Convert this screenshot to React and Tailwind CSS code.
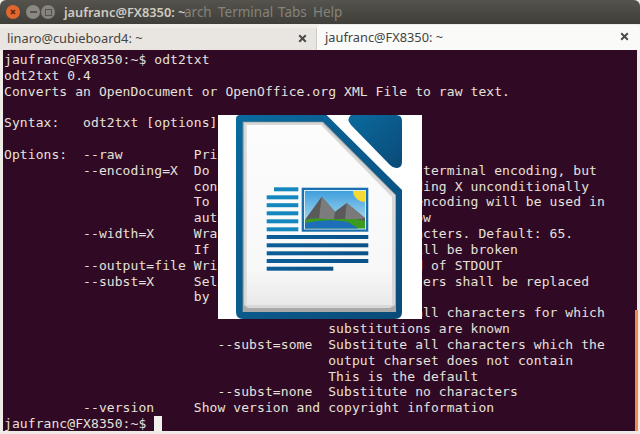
const lines = `jaufranc@FX8350:~$ odt2txt
odt2txt 0.4
Converts an OpenDocument or OpenOffice.org XML File to raw text.

Syntax:   odt2txt [options] filename

Options:  --raw         Print raw XML
          --encoding=X  Do not try to autodetect the terminal encoding, but
                        convert the document to encoding X unconditionally
                        To find out, which terminal encoding will be used in
                        auto mode, use --encoding=show
          --width=X     Wrap text lines after X characters. Default: 65.
                        If set to -1 then no lines will be broken
          --output=file Write output to file, instead of STDOUT
          --subst=X     Select how unmappable characters shall be replaced
                        by ...
                           --subst=all   Substitute all characters for which
                                         substitutions are known
                           --subst=some  Substitute all characters which the
                                         output charset does not contain
                                         This is the default
                           --subst=none  Substitute no characters
          --version     Show version and copyright information
jaufranc@FX8350:~$ `;

function Logo() {
  const short = [
    [56, 74.3], [48.7, 82.3], [48.7, 90.2], [48.7, 98.3], [48.7, 106.3], [48.7, 114.3],
  ];
  const long = [122, 130.3, 138.3, 146];
  return (
    <svg width="204" height="204" viewBox="0 0 204 204" className="block">
      <defs>
        <linearGradient id="blueDoc" x1="0" y1="0" x2="1" y2="1">
          <stop offset="0" stopColor="#0a6a9e" />
          <stop offset="1" stopColor="#0b4a78" />
        </linearGradient>
        <linearGradient id="page" x1="0" y1="0" x2="0" y2="1">
          <stop offset="0" stopColor="#fcfcfc" />
          <stop offset="0.8" stopColor="#f8f8f8" />
          <stop offset="1" stopColor="#e9e9e9" />
        </linearGradient>
        <linearGradient id="sky" x1="0" y1="0" x2="0" y2="1">
          <stop offset="0" stopColor="#3f9fdc" />
          <stop offset="1" stopColor="#bfe3f3" />
        </linearGradient>
        <linearGradient id="bars" x1="0" y1="0" x2="1" y2="0">
          <stop offset="0" stopColor="#0b5e98" />
          <stop offset="1" stopColor="#0b5288" />
        </linearGradient>
      </defs>
      <path d="M22 0H108.5L184 75V197Q184 204 177 204H25Q18 204 18 197V4Q18 0 22 0Z" fill="url(#blueDoc)" />
      <path d="M133 0H178Q184 0 184 6V47Q184 53 178 53Q175 53 172 50L133 10Q128 4 133 0Z" fill="url(#blueDoc)" />
      <path d="M24.7 6.7H105L178 80V197H24.7Z" fill="#a9a9a9" />
      <path d="M26 7.5H104L177 80V190L172 193H30L26 190Z" fill="#d8d8d8" />
      <path d="M28.7 10H103L174 82V190H28.7Z" fill="url(#page)" />
      {short.map(([x, y], i) => (
        <rect key={i} x={x} y={y - 2} width={80.3 - x} height="4" fill="#1487bf" />
      ))}
      {long.map((y, i) => (
        <rect key={i} x="48.7" y={y - 2} width="101.6" height="4" fill="url(#bars)" />
      ))}
      <rect x="48.7" y="151.7" width="66.6" height="4" fill="url(#bars)" />
      <rect x="83.7" y="72.7" width="66.6" height="44" fill="#1a6fae" />
      <rect x="86" y="75" width="62" height="39.5" fill="#d6eef8" />
      <rect x="87" y="76" width="60" height="37.5" fill="url(#sky)" />
      <path d="M147.5 76V87A12.5 11 0 0 1 135 76Z" fill="#f7d933" />
      <path d="M87.5 104L103.7 81.7L117 96.7L128.7 88L147 103V107H87.5Z" fill="#5a5a5a" />
      <path d="M103.7 81.7L101 104H116L117 96.7Z" fill="#7c7c7c" />
      <path d="M128.7 88L127 104H143L147 103Z" fill="#7a7a7a" />
      <path d="M87 105Q96 102 108 104Q125 104 138 104L147 106V113.5H87Z" fill="#3c9a1f" />
      <path d="M87 108Q110 103 130 107L140 113.5H87Z" fill="#1c6fb8" />
    </svg>
  );
}

function CloseX() {
  return (
    <svg width="9" height="9" viewBox="0 0 9 9" className="shrink-0">
      <path d="M1.2 1.2L7.8 7.8M7.8 1.2L1.2 7.8" stroke="#4a4a4a" strokeWidth="2" />
    </svg>
  );
}

export default function App() {
  return (
    <div className="relative flex h-[434px] w-[640px] flex-col overflow-hidden bg-[#efece8] font-['Noto_Sans',sans-serif]">
      <div className="flex h-[24px] shrink-0 items-center rounded-t-[6px] bg-gradient-to-b from-[#55534c] to-[#3f3e39] pl-[6px]">
        <div className="flex h-[14px] w-[14px] items-center justify-center rounded-full bg-[#e2672f] text-white">
          <svg width="8" height="8" viewBox="0 0 8 8">
            <path d="M2 2L6 6M6 2L2 6" stroke="#5a2410" strokeWidth="1.5" />
          </svg>
        </div>
        <div className="ml-[6px] flex h-[14px] w-[14px] items-center justify-center rounded-full bg-[#8a8880]">
          <div className="h-[2px] w-[7px] bg-[#55534c]" />
        </div>
        <div className="ml-[1px] flex h-[14px] w-[14px] items-center justify-center rounded-full bg-[#85837b]">
          <div className="h-[7px] w-[7px] border border-[#55534c]" />
        </div>
        <div className="relative ml-[9px] flex-1 text-[12.8px] font-semibold leading-[24px]">
          <span className="text-[#cfcbc2]">jaufranc@FX8350: ~</span>
          <div className="absolute left-[120px] top-0 flex text-[13.5px] font-normal text-[#85837a]">
            <span className="w-[34px]">arch</span>
            <span className="w-[60px]">Terminal</span>
            <span className="w-[35px]">Tabs</span>
            <span>Help</span>
          </div>
        </div>
      </div>
      <div className="flex h-[26px] shrink-0 text-[12.8px] leading-[22px] text-[#45433f]">
        <div className="mt-[4px] flex h-[22px] w-[317px] items-center justify-between border-r border-[#cfccc6] bg-[#e9e6e1] pb-[2px] pl-[7px] pr-[9px]">
          <span>linaro@cubieboard4: ~</span>
          <CloseX />
        </div>
        <div className="mt-px flex flex-1 items-center justify-between rounded-t-[3px] bg-[#fafaf9] pb-[2px] pl-[8px] pr-[11px]">
          <span>jaufranc@FX8350: ~</span>
          <CloseX />
        </div>
      </div>
      <div className="mx-[3px] mb-[3px] flex-1 overflow-hidden bg-[#300a24] pl-px pt-[2px]">
        <pre className="font-['DejaVu_Sans_Mono',monospace] text-[13px] leading-[15.83px] tracking-[0.08px] text-[#e6e1dc]">
          {lines}
          <span className="inline-block h-[16px] w-[8px] bg-[#f2f0ee] align-top" />
        </pre>
      </div>
      <div className="absolute bottom-[3px] right-[2px] h-[121px] w-[3px] bg-[#f58a4b]" />
      <div className="absolute left-[218px] top-[115px] h-[204px] w-[204px] bg-white">
        <Logo />
      </div>
    </div>
  );
}
